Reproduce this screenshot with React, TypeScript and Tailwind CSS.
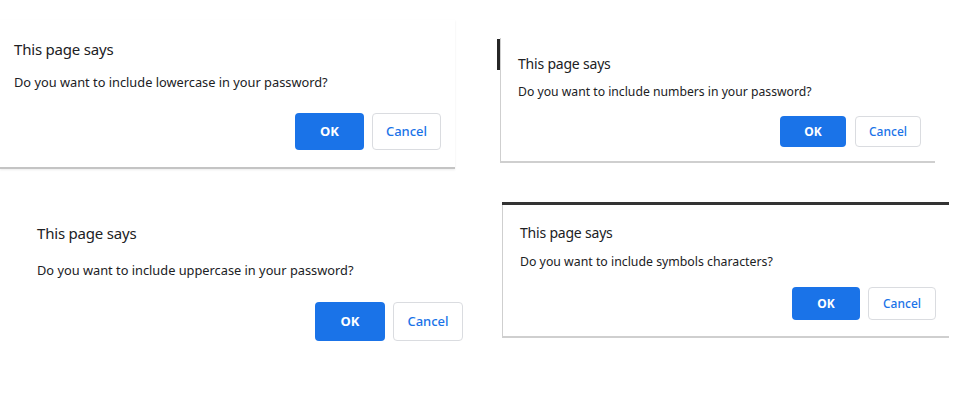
import React from "react";

type DialogProps = {
  message: string;
  box: string;
  titleCls: string;
  msgCls: string;
  btnCls: string;
  btnRow: string;
};

function Dialog({ message, box, titleCls, msgCls, btnCls, btnRow }: DialogProps) {
  return (
    <div className={`absolute bg-white flex flex-col ${box}`}>
      <p className={`text-[#202124] leading-none ${titleCls}`}>This page says</p>
      <p className={`text-[#202124] leading-none ${msgCls}`}>{message}</p>
      <div className={`flex justify-end ${btnRow}`}>
        <button
          className={`rounded-[4px] bg-[#1a73e8] text-white font-bold flex items-center justify-center ${btnCls}`}
        >
          OK
        </button>
        <button
          className={`rounded-[4px] bg-white border border-[#dadce0] text-[#1a73e8] font-medium flex items-center justify-center ${btnCls}`}
        >
          Cancel
        </button>
      </div>
    </div>
  );
}

export default function App() {
  return (
    <div className="relative w-[971px] h-[420px] bg-white overflow-hidden font-['Noto_Sans',sans-serif]">
      {/* top-left: lowercase */}
      <Dialog
        message="Do you want to include lowercase in your password?"
        box="left-0 top-[20px] w-[455px] h-[149px] pl-[14px] pr-[14px] pt-[22px] border-b-2 border-[#c4c4c4] shadow-[0_1px_2px_rgba(0,0,0,0.08)]"
        titleCls="text-[15px] tracking-[-0.2px]"
        msgCls="text-[12.8px] mt-[19px]"
        btnCls="w-[69px] h-[37px] text-[13px]"
        btnRow="mt-[24px] gap-[8px]"
      />

      {/* top-right: numbers */}
      <div className="absolute left-[497px] top-[39px] w-[3px] h-[31px] bg-[#262626]" />
      <Dialog
        message="Do you want to include numbers in your password?"
        box="left-[500px] top-[38px] w-[435px] h-[125px] pl-[17px] pr-[14px] pt-[19px] border-l border-b-2 border-[#cfcfcf]"
        titleCls="text-[14px] tracking-[-0.2px]"
        msgCls="text-[12.2px] mt-[15px]"
        btnCls="w-[66px] h-[31px] text-[12px]"
        btnRow="mt-[18px] gap-[9px]"
      />

      {/* bottom-left: uppercase */}
      <Dialog
        message="Do you want to include uppercase in your password?"
        box="left-[23px] top-[200px] w-[455px] h-[150px] pl-[14px] pr-[15px] pt-[26px]"
        titleCls="text-[15px] tracking-[-0.2px]"
        msgCls="text-[12.8px] mt-[23px]"
        btnCls="w-[70px] h-[39px] text-[13px]"
        btnRow="mt-[25px] gap-[8px]"
      />

      {/* bottom-right: symbols */}
      <div className="absolute left-[502px] top-[202px] w-[447px] h-[3px] bg-[#333333]" />
      <div className="absolute left-[502px] top-[205px] w-[1px] h-[35px] bg-[#555555]" />
      <Dialog
        message="Do you want to include symbols characters?"
        box="left-[502px] top-[205px] w-[447px] h-[133px] pl-[17px] pr-[13px] pt-[21px] border-l border-b-2 border-[#cfcfcf]"
        titleCls="text-[14px] tracking-[-0.2px]"
        msgCls="text-[12.3px] mt-[16px]"
        btnCls="w-[68px] h-[33px] text-[12px]"
        btnRow="mt-[19px] gap-[8px]"
      />
    </div>
  );
}
